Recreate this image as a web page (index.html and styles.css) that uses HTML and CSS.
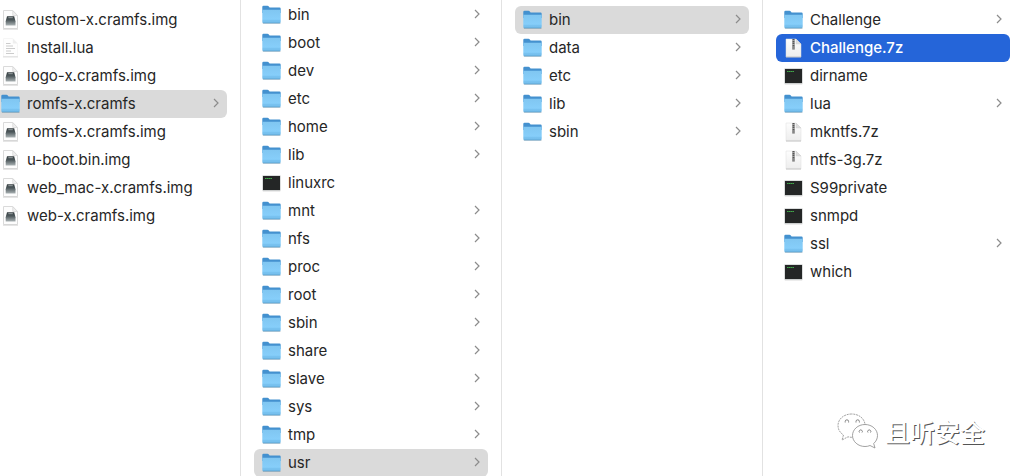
FILE: index.html
```
<!DOCTYPE html>
<html lang="en">
<head>
<meta charset="utf-8">
<title>File browser</title>
<link rel="stylesheet" href="styles.css">
</head>
<body>
<svg class="sprite" aria-hidden="true">
  <defs>
    <linearGradient id="folder-face" x1="0" y1="0" x2="0" y2="1">
      <stop offset="0" stop-color="#80c6f1"/><stop offset="0.7" stop-color="#86cefa"/><stop offset="0.8" stop-color="#78c2f0"/><stop offset="1" stop-color="#74bcea"/>
    </linearGradient>
    <linearGradient id="paper" x1="0" y1="0" x2="0" y2="1">
      <stop offset="0" stop-color="#fdfdfd"/><stop offset="1" stop-color="#ededed"/>
    </linearGradient>
    <linearGradient id="drive" x1="0" y1="0" x2="0" y2="1">
      <stop offset="0" stop-color="#353d40"/><stop offset="0.4" stop-color="#4c575a"/><stop offset="1" stop-color="#aab2b4"/>
    </linearGradient>
  </defs>
  <symbol id="folder" viewBox="0 0 19 20">
    <path d="M1 18.200h17.400v.8H1z" fill="#000" opacity=".22"/>
    <path d="M.3 2Q.3 .8 1.500 .8H5.500q.8 0 1.300.7L7.600 2.600h9.900q1.200 0 1.200 1.200V8H.3z" fill="#4491cf"/>
    <path d="M.3 4.700h18.400v12.100q0 1.400-1.300 1.400H1.600q-1.300 0-1.300-1.400z" fill="url(#folder-face)"/>
    <path d="M.6 17.900h17.800" stroke="#5a9fc9" stroke-width=".6"/>
  </symbol>
  <symbol id="image" viewBox="0 0 19 20">
    <path d="M2.500.5h9.300L16.500 5.500v13H2.500z" fill="#fdfdfd" stroke="#dadada"/>
    <path d="M2 19.200h15" stroke="#cfcfcf" stroke-width=".8"/>
    <path d="M11.800.8v4.700h4.600z" fill="#f0f0f0" stroke="#d6d6d6" stroke-width=".7"/>
    <path d="M6 6.300h7.200l1.300 5v4.200H4.700v-4.200z" fill="url(#drive)"/>
    <path d="M7.300 7.700h4.500" stroke="#aeb7b9" stroke-width=".8"/>
  </symbol>
  <symbol id="text" viewBox="0 0 19 20">
    <path d="M2.500.5h9.300L16.500 5.500v13H2.500z" fill="#fefefe" stroke="#f6f6f6"/>
    <path d="M2 18.900h15" stroke="#d8d8d8"/>
    <path d="M11.800.8v4.700h4.600z" fill="#eee"/>
    <path d="M5 5.500h4.500M5 8h7M5 10.500h9M5 13h5M5 15.500h8" stroke="#c6c6c6" stroke-width=".9"/>
  </symbol>
  <symbol id="archive" viewBox="0 0 19 20">
    <path d="M2 1h10l5 5v13H2z" fill="url(#paper)" stroke="#dcdcdc" stroke-width=".5"/>
    <path d="M2 19h15" stroke="#bdbdbd" stroke-width=".8"/>
    <path d="M12 1v5h5z" fill="#dedede" stroke="#ccc" stroke-width=".4"/>
    <path d="M8 1h3v10.500H8z" fill="#b9b9b9"/>
    <path d="M9.500 1v8" stroke="#555" stroke-width="1.800" stroke-dasharray="1.300 .6"/>
    <path d="M8.400 8.500h2.200v3H8.400z" fill="#858585"/>
  </symbol>
  <symbol id="terminal" viewBox="0 0 19 20">
    <path d="M.8 17.500h17.400v.8H.8z" fill="#000" opacity=".25"/>
    <path d="M.5 2.500h18v15H.5z" fill="#b9bcbc"/>
    <path d="M1 3h17v14H1z" fill="#242626"/>
    <path d="M3 5.500h7" stroke="#41a84a" stroke-width="1.200" stroke-dasharray="1.600 .3"/>
  </symbol>
  <symbol id="chevron" viewBox="0 0 6 10">
    <path d="M1 1l4 4-4 4" fill="none" stroke="currentColor" stroke-width="1.200"/>
  </symbol>
</svg>
<main class="browser"></main>
<div class="watermark">
  <svg class="watermark-logo" viewBox="0 0 42 36" aria-hidden="true">
    <g fill="#fff" stroke="#8a8a8a" stroke-width=".8">
      <path stroke-dasharray="2 .8" d="M14.500 1C7 1 1 6 1 12.500c0 4 2 7.200 5.500 9.500L5 27l6-3.200c2 .5 4 .7 6 .4C29 24 28 18 28 11 27 5 21.500 1 14.500 1z"/>
      <path d="M28 11.500c-7 0-12.500 5-12.500 11S21 33.500 28 33.500c2 0 3.500-.3 5-1l5 2.500-1.300-4.500c2.300-2 3.800-4.700 3.800-8 0-6-5.500-11-12.500-11z"/>
    </g>
    <g fill="none" stroke="#777" stroke-width=".9">
      <path d="M8.200 9.500v-1a1.700 1.700 0 0 1 3.400 0v1M19 9.500v-1a1.700 1.700 0 0 1 3.400 0v1"/>
      <path d="M22.500 19.500a1.600 1.600 0 1 1 2.500 0M31 19.500a1.600 1.600 0 1 1 2.500 0"/>
    </g>
  </svg>
  <span lang="zh">且听安全</span>
</div>
<script src="browser.js"></script>
</body>
</html>
```

FILE: styles.css
```
* { box-sizing: border-box; }

body {
  margin: 0;
  min-height: 100vh;
  background: #fff;
  color: #262626;
  font: 15px/20px Inter, "Liberation Sans", sans-serif;
}

.sprite { position: absolute; width: 0; height: 0; }

.browser {
  display: grid;
  grid-template-columns: 241fr 261fr 261fr 255fr;
  height: 100vh;
  overflow: hidden;
}

.column {
  margin: 0;
  padding: 6px 13px 0;
  border-right: 1px solid #e2e2e2;
  list-style: none;
}

.column:first-child { padding-left: 0; }
.column:nth-child(2) { padding-top: 1px; }
.column:last-child { padding-right: 8px; border-right: 0; }

.row {
  display: flex;
  align-items: center;
  gap: 7px;
  width: 100%;
  height: 28px;
  padding: 0 8px;
  border: 0;
  border-radius: 6px;
  background: transparent;
  color: inherit;
  font: inherit;
  text-align: left;
}

.column:first-child .row {
  padding-left: 1px;
  border-radius: 0 6px 6px 0;
}

.row.open { background: #dadada; }
.row.selected { background: #2565d9; color: #fff; font-weight: 500; }

.icon { flex: none; width: 19px; height: 20px; }
.name { flex: 1; white-space: nowrap; }
.chevron { flex: none; width: 6px; height: 10px; margin-bottom: 2px; color: #8c8c8c; }

.watermark {
  position: absolute;
  right: 33px;
  bottom: 27px;
  display: flex;
  align-items: center;
  gap: 6px;
  color: #fff;
  font: 500 25px/36px "Noto Sans CJK SC", sans-serif;
  text-shadow: 1px 1px 0 #555;
}

.watermark-logo { width: 42px; height: 36px; }
```

FILE: browser.js
```
const columns = [
  [
    ["image", "custom-x.cramfs.img"], ["text", "Install.lua"],
    ["image", "logo-x.cramfs.img"], ["folder", "romfs-x.cramfs", "open"],
    ["image", "romfs-x.cramfs.img"], ["image", "u-boot.bin.img"],
    ["image", "web_mac-x.cramfs.img"], ["image", "web-x.cramfs.img"]
  ],
  [
    ["folder", "bin"], ["folder", "boot"], ["folder", "dev"], ["folder", "etc"],
    ["folder", "home"], ["folder", "lib"], ["terminal", "linuxrc"],
    ["folder", "mnt"], ["folder", "nfs"], ["folder", "proc"], ["folder", "root"],
    ["folder", "sbin"], ["folder", "share"], ["folder", "slave"],
    ["folder", "sys"], ["folder", "tmp"], ["folder", "usr", "open"]
  ],
  [
    ["folder", "bin", "open"], ["folder", "data"], ["folder", "etc"],
    ["folder", "lib"], ["folder", "sbin"]
  ],
  [
    ["folder", "Challenge"], ["archive", "Challenge.7z", "selected"],
    ["terminal", "dirname"], ["folder", "lua"], ["archive", "mkntfs.7z"],
    ["archive", "ntfs-3g.7z"], ["terminal", "S99private"],
    ["terminal", "snmpd"], ["folder", "ssl"], ["terminal", "which"]
  ]
];

const row = ([kind, name, state = ""]) => `
  <li><button type="button" class="row ${state}">
    <svg class="icon" aria-hidden="true"><use href="#${kind}"/></svg>
    <span class="name">${name}</span>
    ${kind === "folder" ? '<svg class="chevron" aria-hidden="true"><use href="#chevron"/></svg>' : ""}
  </button></li>`;

document.querySelector(".browser").innerHTML = columns
  .map((items) => `<ul class="column">${items.map(row).join("")}</ul>`)
  .join("");
```
